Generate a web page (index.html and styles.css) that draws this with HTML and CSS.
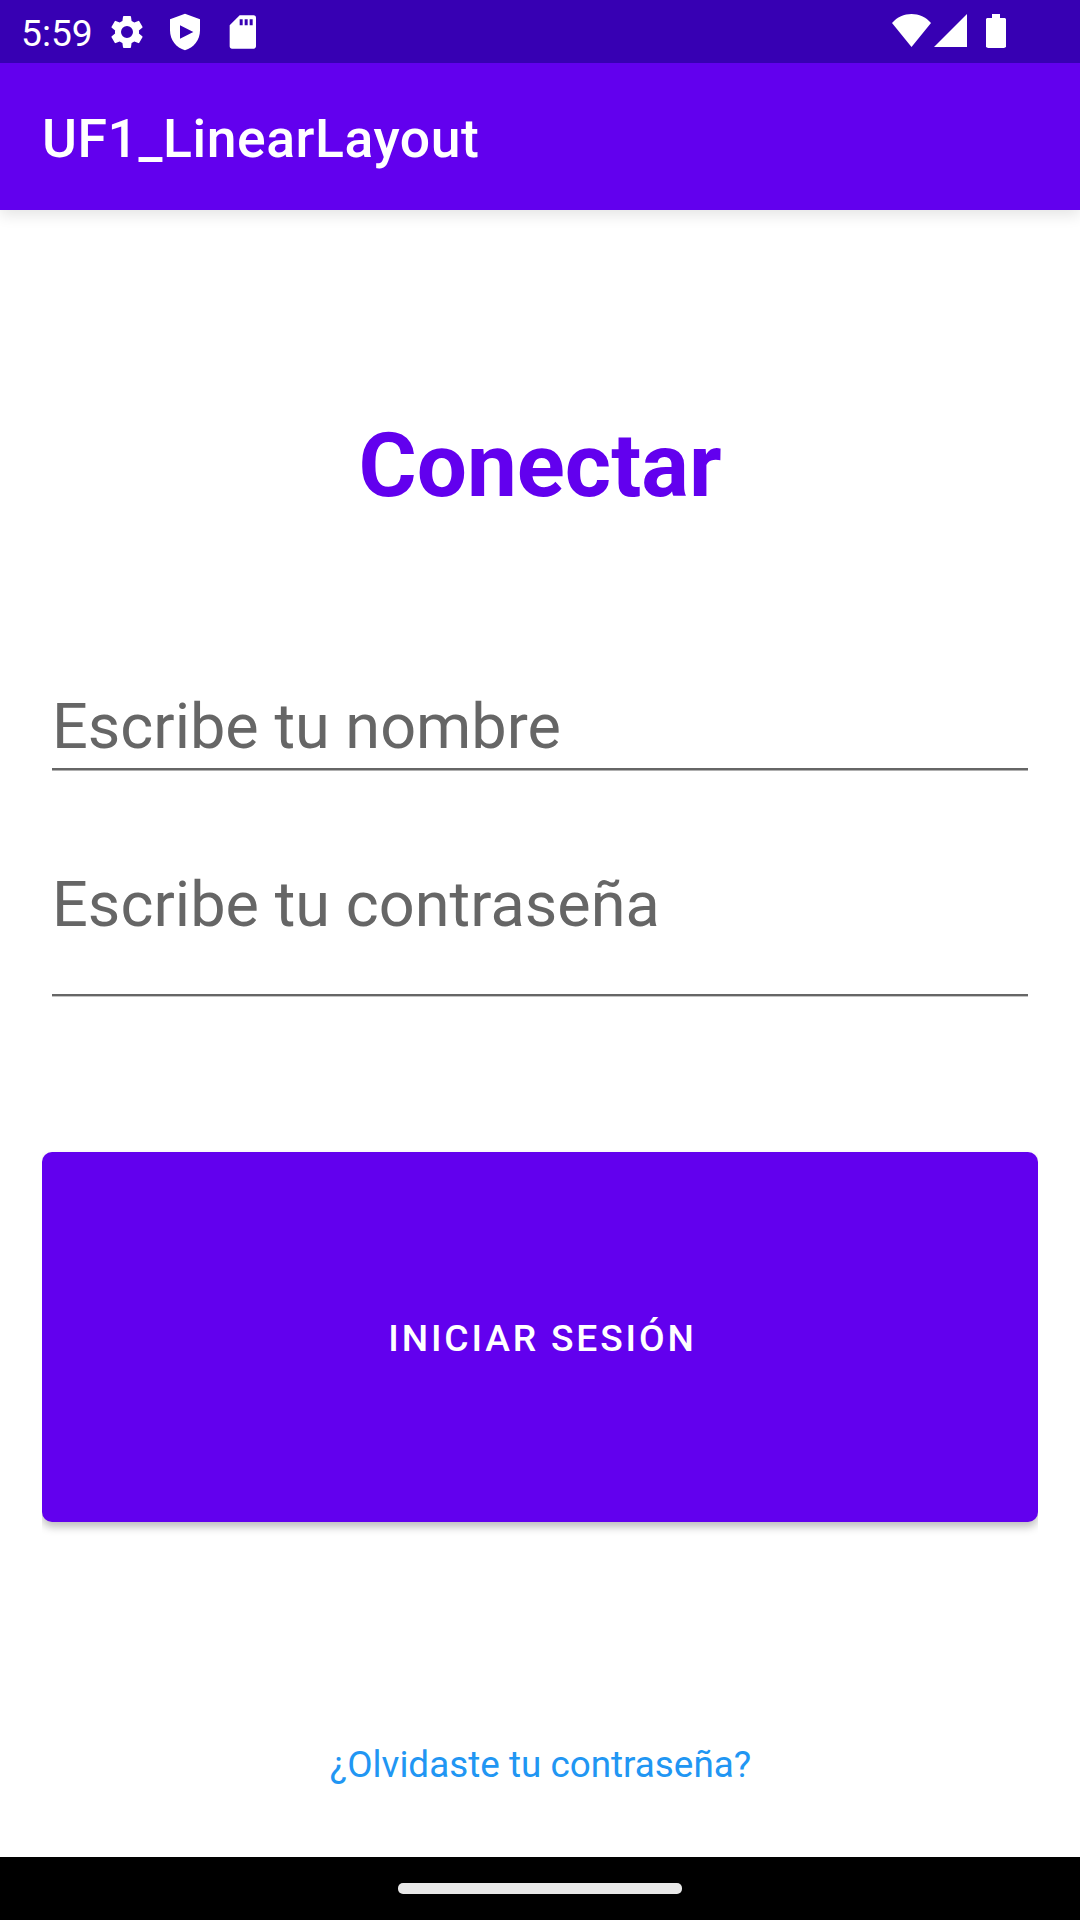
FILE: index.html
```html
<!DOCTYPE html>
<html lang="es">
<head>
<meta charset="utf-8">
<title>UF1_LinearLayout</title>
<link rel="stylesheet" href="styles.css">
</head>
<body>
<div class="screen">
  <div class="status">
    <span class="clock">5:59</span>
    <svg class="gear" width="40" height="40" viewBox="0 0 24 24"><path d="M19.14 12.94c.04-.3.06-.61.06-.94s-.02-.64-.07-.94l2.03-1.58a.49.49 0 0 0 .12-.61l-1.92-3.32a.49.49 0 0 0-.59-.22l-2.39.96a7 7 0 0 0-1.62-.94l-.36-2.54a.48.48 0 0 0-.48-.41h-3.84a.47.47 0 0 0-.47.41l-.36 2.54c-.59.24-1.13.57-1.62.94l-2.39-.96a.47.47 0 0 0-.59.22L2.74 8.87a.47.47 0 0 0 .12.61l2.03 1.58c-.05.3-.09.63-.09.94s.02.64.07.94l-2.03 1.58a.49.49 0 0 0-.12.61l1.92 3.32c.12.22.37.29.59.22l2.39-.96c.5.38 1.03.7 1.62.94l.36 2.54c.05.24.24.41.48.41h3.84c.24 0 .44-.17.47-.41l.36-2.54c.59-.24 1.13-.56 1.62-.94l2.39.96c.22.08.47 0 .59-.22l1.92-3.32a.47.47 0 0 0-.12-.61zM12 15.6a3.6 3.6 0 1 1 0-7.2 3.6 3.6 0 0 1 0 7.2z"/></svg>
    <svg class="shield" width="40" height="40" viewBox="0 0 24 24"><path fill-rule="evenodd" d="M12 1 3 4.400V11c0 5.800 3.800 10.600 9 12 5.200-1.400 9-6.200 9-12V4.400zM9 8v8l8-4z"/></svg>
    <svg class="sd" width="40" height="40" viewBox="0 0 24 24"><path d="M18.400 2H10L4 8v12.600c0 .8.600 1.400 1.400 1.400h13c.8 0 1.400-.6 1.400-1.400V3.400c0-.8-.6-1.400-1.400-1.400zM11.800 8H10V4.400h1.800zm3 0H13V4.400h1.800zm3 0H16V4.400h1.800z"/></svg>
    <span class="spacer"></span>
    <svg class="wifi" width="40" height="34" viewBox="0 0 40 34"><path d="M19.500 33 0 9C10-3 29-3 39 9z"/></svg>
    <svg class="signal" width="33" height="34" viewBox="0 0 33 34"><path d="M33 0v33H0z"/></svg>
    <svg class="battery" width="20" height="34" viewBox="0 0 20 34"><path d="M6 0h8v4h5l1 1v28l-2 1H2l-2-1V5l1-1h5z"/></svg>
  </div>
  <header class="appbar">UF1_LinearLayout</header>
  <main class="content">
    <h1 class="title">Conectar</h1>
    <div class="field name">Escribe tu nombre</div>
    <div class="field password">Escribe tu contraseña</div>
    <button class="login">INICIAR SESIÓN</button>
    <a class="forgot">¿Olvidaste tu contraseña?</a>
  </main>
  <div class="navbar"><div class="handle"></div></div>
</div>
</body>
</html>
```
FILE: styles.css
```css
* { box-sizing: border-box; }
body { margin: 0; font-family: Roboto, sans-serif; }
.screen { width: 1080px; height: 1920px; display: flex; flex-direction: column; background: #fff; overflow: hidden; }
.status { height: 63px; flex: none; background: #3700b3; color: #fff; display: flex; align-items: center; padding: 0 74px 0 21px; }
.status svg { fill: #fff; flex: none; }
.clock { font-size: 37.2px; width: 70px; line-height: 63px; padding-top: 3px; white-space: nowrap; }
.gear { margin-left: 16px; }
.shield { margin-left: 18px; }
.sd { margin-left: 18px; }
.spacer { flex: 1; }
.wifi, .signal, .battery { margin-bottom: 1px; }
.signal { margin-left: 2px; }
.battery { margin-left: 19px; }
.appbar { height: 147px; flex: none; background: #6200ee; color: #fff; font-size: 53.5px; font-weight: 500; letter-spacing: .55px; line-height: 151px; padding-left: 42px; box-shadow: 0 5px 14px rgba(0,0,0,.11); clip-path: inset(0 0 -24px 0); }
.content { flex: 1; display: flex; flex-direction: column; padding: 0 42px; }
.title { margin: 204px 0 0; height: 104px; line-height: 104px; font-size: 89px; font-weight: 700; color: #6200ee; text-align: center; }
.field { margin: 0 10px; padding-top: 1px; font-size: 63px; line-height: 74px; color: #666; border-bottom: 2px solid #666; }
.name { margin-top: 171px; height: 81px; box-shadow: 0 1px 0 #b0b0b0; }
.password { margin-top: 97px; height: 129px; letter-spacing: .04px; box-shadow: 0 1px 0 #c4c4c4; }
.login { margin-top: 156px; height: 370px; border: 0; border-radius: 10px; background: #6200ee; color: #fff; font: 500 37.2px Roboto, sans-serif; letter-spacing: 2.85px; padding: 2px 0 0 5px; box-shadow: 0 5px 9px rgba(0,0,0,.26); clip-path: inset(-2px 0 -20px 0); }
.forgot { margin-top: 221px; text-align: center; font-size: 36.85px; line-height: 44px; padding-left: 1px; color: #2196f3; }
.navbar { height: 63px; flex: none; background: #000; display: flex; justify-content: center; align-items: center; }
.handle { width: 284px; height: 11px; border-radius: 5px; background: #e8e8e8; }
```
